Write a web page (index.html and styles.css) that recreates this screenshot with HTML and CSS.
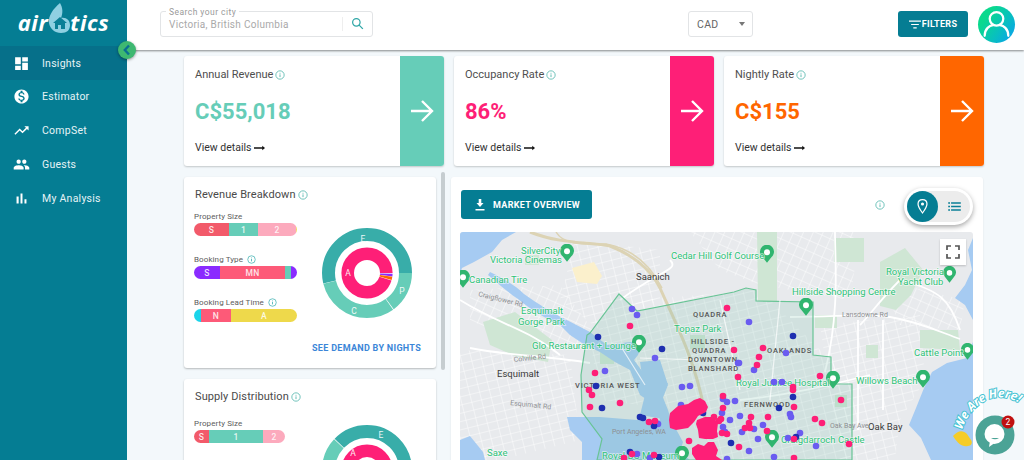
FILE: index.html
```html
<!DOCTYPE html>
<html lang="en">
<head>
<meta charset="utf-8">
<title>Airbtics Insights</title>
<link rel="stylesheet" href="styles.css">
</head>
<body>
<svg class="defs" width="0" height="0" aria-hidden="true">
  <defs>
    <symbol id="info" viewBox="0 0 12 12"><circle cx="6" cy="6" r="5" fill="none" stroke="currentColor" stroke-width="1"/><path d="M6 5.3v3.2M6 3.4v1" fill="none" stroke="currentColor" stroke-width="1.1"/></symbol>
    <symbol id="bigarrow" viewBox="0 0 24 24"><path d="M1 12h21M12 2l10 10-10 10" fill="none" stroke="currentColor" stroke-width="2.4"/></symbol>
    <symbol id="smallarrow" viewBox="0 0 12 6"><path d="M0 3h10" stroke="currentColor" stroke-width="1.4"/><path d="M9 .6 12 3 9 5.4z" fill="currentColor"/></symbol>
    <symbol id="pin" viewBox="0 0 16 20"><path d="M8 20 3 13.6A8 8 0 1 1 13 13.6z" fill="currentColor"/><circle cx="8" cy="8" r="3.4" fill="#fff"/></symbol>
    <pattern id="streets" width="10" height="8" patternUnits="userSpaceOnUse" patternTransform="rotate(-14)"><path d="M0 0H10M0 0V8" stroke="#fff" stroke-width=".9"/></pattern>
    <pattern id="streets2" width="9" height="10" patternUnits="userSpaceOnUse" patternTransform="rotate(24)"><path d="M0 0H9M0 0V10" stroke="#fff" stroke-width=".9"/></pattern>
  </defs>
</svg>
<div class="app">
  <aside class="sidebar">
    <div class="logo">
      <span>air</span>
      <svg class="logo-mark" viewBox="0 0 24 30"><path d="M13 0C6 6 1 13 2 20c1 6 6 10 12 10 6 0 9-3 9-8 0-5-4-8-9-7 2-5 2-10-1-15z" fill="#8fd0e2"/><path d="M6 20l7-6 7 6h-2v6h-4v-4h-3v4H8v-6z" fill="#0b7f96"/></svg>
      <span>tics</span>
    </div>
    <nav class="nav">
      <a class="nav-item active"><svg viewBox="0 0 24 24"><path d="M3 13h8V3H3v10zm0 8h8v-6H3v6zm10 0h8V11h-8v10zm0-18v6h8V3h-8z"/></svg>Insights</a>
      <a class="nav-item"><svg viewBox="0 0 24 24"><path d="M12 2C6.48 2 2 6.48 2 12s4.48 10 10 10 10-4.48 10-10S17.52 2 12 2zm1.41 16.09V20h-2.67v-1.93c-1.71-.36-3.16-1.46-3.27-3.4h1.96c.1 1.05.82 1.87 2.65 1.87 1.96 0 2.4-.98 2.4-1.59 0-.83-.44-1.61-2.67-2.14-2.48-.6-4.18-1.62-4.18-3.67 0-1.72 1.39-2.84 3.11-3.21V4h2.67v1.95c1.86.45 2.79 1.86 2.85 3.39H14.3c-.05-1.11-.64-1.87-2.22-1.87-1.5 0-2.4.68-2.4 1.64 0 .84.65 1.39 2.67 1.91s4.18 1.39 4.18 3.91c-.01 1.83-1.38 2.83-3.12 3.16z"/></svg>Estimator</a>
      <a class="nav-item"><svg viewBox="0 0 24 24"><path d="M16 6l2.29 2.29-4.88 4.88-4-4L2 16.59 3.41 18l6-6 4 4 6.3-6.29L22 12V6z"/></svg>CompSet</a>
      <a class="nav-item"><svg viewBox="0 0 24 24"><path d="M16 11c1.66 0 2.99-1.34 2.99-3S17.66 5 16 5c-1.66 0-3 1.34-3 3s1.34 3 3 3zm-8 0c1.66 0 2.99-1.34 2.99-3S9.66 5 8 5C6.34 5 5 6.34 5 8s1.34 3 3 3zm0 2c-2.33 0-7 1.17-7 3.5V19h14v-2.5c0-2.33-4.67-3.5-7-3.5zm8 0c-.29 0-.62.02-.97.05 1.16.84 1.97 1.97 1.97 3.45V19h6v-2.5c0-2.33-4.67-3.5-7-3.5z"/></svg>Guests</a>
      <a class="nav-item"><svg viewBox="0 0 24 24"><path d="M5 9.2h3V19H5zM10.6 5h2.8v14h-2.8zm5.6 8H19v6h-2.8z"/></svg>My Analysis</a>
    </nav>
    <button class="collapse" aria-label="Collapse"><svg viewBox="0 0 10 12"><path d="M7 1.5 2.8 6 7 10.5" fill="none" stroke="#0b6f92" stroke-width="2.4"/></svg></button>
  </aside>

  <div class="content">
    <header class="topbar">
      <div class="search">
        <span class="search-label">Search your city</span>
        <span class="search-value">Victoria, British Columbia</span>
        <span class="search-btn"><svg viewBox="0 0 16 16"><circle cx="6.6" cy="6.6" r="4.6" fill="none" stroke="currentColor" stroke-width="1.5"/><path d="m10 10 4.6 4.6" stroke="currentColor" stroke-width="1.6"/></svg></span>
      </div>
      <div class="currency"><span>CAD</span><i class="caret"></i></div>
      <button class="filters"><svg viewBox="0 0 14 10"><path d="M0 1h14M2.5 5h9M5 9h4" stroke="#fff" stroke-width="1.3"/></svg>FILTERS</button>
      <div class="avatar"><svg viewBox="0 0 36 36"><circle cx="18" cy="12.5" r="6.6" fill="none" stroke="#fff" stroke-width="2.2"/><path d="M6.5 29c0-7 5-10 8-10.5M29.5 29c0-7-5-10-8-10.500" fill="none" stroke="#fff" stroke-width="2.2" stroke-linecap="round"/></svg></div>
    </header>

    <main class="main">
      <section class="kpis">
        <article class="kpi">
          <div class="kpi-body">
            <h3 class="kpi-title">Annual Revenue <svg class="info"><use href="#info"/></svg></h3>
            <div class="kpi-value green">C$55,018</div>
            <div class="kpi-link">View details <svg class="small-arrow"><use href="#smallarrow"/></svg></div>
          </div>
          <div class="kpi-side bg-green"><svg><use href="#bigarrow"/></svg></div>
        </article>
        <article class="kpi">
          <div class="kpi-body">
            <h3 class="kpi-title">Occupancy Rate <svg class="info"><use href="#info"/></svg></h3>
            <div class="kpi-value pink">86%</div>
            <div class="kpi-link">View details <svg class="small-arrow"><use href="#smallarrow"/></svg></div>
          </div>
          <div class="kpi-side bg-pink"><svg><use href="#bigarrow"/></svg></div>
        </article>
        <article class="kpi">
          <div class="kpi-body">
            <h3 class="kpi-title">Nightly Rate <svg class="info"><use href="#info"/></svg></h3>
            <div class="kpi-value orange">C$155</div>
            <div class="kpi-link">View details <svg class="small-arrow"><use href="#smallarrow"/></svg></div>
          </div>
          <div class="kpi-side bg-orange"><svg><use href="#bigarrow"/></svg></div>
        </article>
      </section>

      <section class="lower">
        <div class="left-col">
          <article class="panel first">
            <h3 class="panel-title">Revenue Breakdown <svg class="info"><use href="#info"/></svg></h3>
            <div class="panel-body">
              <div class="bars">
                <div class="bar-label">Property Size</div>
                <div class="bar">
                  <span class="seg c-red w34">S</span><span class="seg c-green w28">1</span><span class="seg c-rose grow">2</span><span class="seg c-yellow w1"></span>
                </div>
                <div class="bar-label gap">Booking Type <svg class="info tiny"><use href="#info"/></svg></div>
                <div class="bar">
                  <span class="seg c-purple w25">S</span><span class="seg c-coral grow">MN</span><span class="seg c-green w5"></span><span class="seg c-purple w6"></span>
                </div>
                <div class="bar-label gap">Booking Lead Time <svg class="info tiny"><use href="#info"/></svg></div>
                <div class="bar">
                  <span class="seg c-cyan w7"></span><span class="seg c-coral w30">N</span><span class="seg c-lime grow">A</span>
                </div>
              </div>
              <svg class="donut" viewBox="-47 -47 94 94">
                <circle class="ring r-e" r="38.500" pathLength="360" stroke-dasharray="193.500 360" stroke-dashoffset="-166.500"/>
                <circle class="ring r-c" r="38.500" pathLength="360" stroke-dasharray="111.500 360" stroke-dashoffset="-54.500"/>
                <circle class="ring r-c" r="38.500" pathLength="360" stroke-dasharray="53.500 360"/>
                <circle class="inner r-a" r="19.300" pathLength="360" stroke-dasharray="345 360" stroke-dashoffset="-17"/>
                <circle class="inner r-p" r="19.300" pathLength="360" stroke-dasharray="6 360" stroke-dashoffset="-2"/>
                <circle class="inner r-o" r="19.300" pathLength="360" stroke-dasharray="7 360" stroke-dashoffset="-9"/>
                <text class="donut-text" x="-4" y="-31">E</text>
                <text class="donut-text" x="-19" y="3">A</text>
                <text class="donut-text" x="35" y="21">P</text>
                <text class="donut-text" x="-13" y="41">C</text>
              </svg>
            </div>
            <a class="demand">SEE DEMAND BY NIGHTS</a>
          </article>
          <article class="panel second">
            <h3 class="panel-title">Supply Distribution <svg class="info"><use href="#info"/></svg></h3>
            <div class="panel-body">
              <div class="bars supply">
                <div class="bar-label">Property Size</div>
                <div class="bar">
                  <span class="seg c-red w15">S</span><span class="seg c-green grow">1</span><span class="seg c-rose w22">2</span>
                </div>
              </div>
              <svg class="donut lower-donut" viewBox="-47 -47 94 94">
                <circle class="ring r-e" r="38.500" pathLength="360" stroke-dasharray="250 360" stroke-dashoffset="-224"/>
                <circle class="ring r-c" r="38.500" pathLength="360" stroke-dasharray="80 360" stroke-dashoffset="-143"/>
                <circle class="inner r-a" r="19.300"/>
                <text class="donut-text" x="14" y="-32">E</text>
                <text class="donut-text" x="-14" y="-14">A</text>
              </svg>
            </div>
          </article>
        </div>
        <div class="scrollbar"></div>

        <article class="market">
          <div class="market-head">
            <button class="overview"><svg viewBox="0 0 14 14"><path d="M10.500 5H8.300V1H5.700v4H3.500L7 9zM2.500 11h9v1.500h-9z" fill="#fff"/></svg>MARKET OVERVIEW</button>
            <svg class="info market-info"><use href="#info"/></svg>
            <div class="view-toggle">
              <div class="toggle-track">
                <span class="toggle-on"><svg viewBox="0 0 16 20"><path d="M8 1.500C4.600 1.500 2.500 4 2.500 7c0 3.800 5.500 11 5.500 11s5.500-7.200 5.500-11c0-3-2.100-5.500-5.500-5.500z" fill="none" stroke="#fff" stroke-width="1.500"/><circle cx="8" cy="7" r="1.900" fill="#fff"/></svg></span>
                <span class="toggle-off"><svg viewBox="0 0 14 10"><path d="M0 1h2M3.200 1H14M0 5h2M3.200 5H14M0 9h2M3.200 9H14" stroke="#0b7f96" stroke-width="1.700"/></svg></span>
              </div>
            </div>
          </div>
          <div class="map">
            <svg class="map-svg" viewBox="460 232 513 228" preserveAspectRatio="none">
              <rect x="460" y="232" width="513" height="228" fill="#e8eaed"/>
              <!-- street grids -->
              <path d="M470 290 560 285 600 340 540 355 470 320z" fill="url(#streets2)"/>
              <path d="M575 240 660 250 660 300 600 330 560 300z" fill="url(#streets)"/>
              <path d="M460 350 570 355 580 440 500 460 460 460z" fill="url(#streets)"/>
              <path d="M640 300 760 290 850 380 850 460 720 460 680 410 600 400 590 340z" fill="url(#streets)"/>
              <path d="M820 325 920 315 925 380 900 420 895 460 840 460z" fill="url(#streets)"/>
              <path d="M690 232H860L850 300 760 285 720 270z" fill="url(#streets2)"/>
              <path d="M880 280 965 300 960 330 900 325z" fill="url(#streets2)"/>
              <!-- parks -->
              <g class="park">
                <path d="M483 322 515 312 552 340 548 362 515 356 490 345z"/>
                <path d="M757 232h20v69h-19z"/>
                <path d="M880 262l25-14 18 22-12 25-15 15-16-4z"/>
                <path d="M834 238h30v24h-30z"/>
                <path d="M920 330h38l2 20-40-2z"/>
                <path d="M815 315h22v13h-22zM866 345h12v13h-12zM600 352h14v12h-14zM525 255h14v10h-14zM690 335h15v14h-15zM835 395h12v12h-12z"/>
              </g>
              <path d="M572 268l22-6 8 14-5 8-20-2z" fill="#fbf0cc"/>
              <!-- water -->
              <g class="water">
                <path d="M460 232h56l-14 8-10 12-18 10-12 6-4 12-5-2z"/>
                <path d="M490 272c12 6 24 12 34 22 14 10 28 18 40 25l-4 6c-14-6-30-16-42-26-12-8-20-16-30-24z"/>
                <path d="M563 318 590 332 607 345 630 342 642 344 638 355 634 360 645 375 648 385 668 383 662 395 668 410 671 420 660 420 655 405 640 395 630 370 615 362 600 352 585 345 570 335 560 325z"/>
                <path d="M640 362 660 360 668 385 662 400 670 420 640 415 645 395z"/>
                <path d="M567 417 600 417 637 420 671 420 683 442 680 452 690 460H582L582 442 570 430z"/>
                <path d="M973 238 968 250 972 270 965 285 955 298 965 305 973 320 973 342 967 358 947 363 932 372 924 388 916 408 909 425 921 438 931 460H973z"/>
                <path d="M460 440 470 436 483 452 485 460H460z"/>
              </g>
              <path d="M530 232c30 12 60 10 80 14 20 8 40 22 50 42 16 36 34 70 44 120 2 18 2 30 3 30" fill="none" stroke="#dcd3b4" stroke-width="3"/>
              <path d="M556 232c8 14 30 12 50 12 22 4 42 16 56 44" fill="none" stroke="#dcd3b4" stroke-width="1.500"/>
              <!-- main roads -->
              <g class="road">
                <path d="M460 300c40 25 70 30 100 55"/>
                <path d="M470 348c40 8 80 8 120 15"/>
                <path d="M620 300c40-30 60-30 50-40"/>
                <path d="M790 317c50 0 70-4 100 0 30 5 50 15 70 22"/>
                <path d="M900 280c-20 20-30 35-40 45"/>
                <path d="M960 330c-10-30-20-40-60-50"/>
                <path d="M835 232c0 30 5 80-10 140"/>
                <path d="M858 320v110M883 320v90"/>
                <path d="M740 400c50-5 90-15 130-25"/>
              </g>
              <!-- region overlay -->
              <path class="region" d="M619 294 637 311 734 292 746 288 756 290 756 301 813 302 813 355 831 357 831 384 852 384 852 460H597L602 439 582 412 581 375 587 335 590 333Z"/>
              <path class="h-road" d="M640 358 700 360M720 300l20 90M780 300l-10 100M620 345l25 40"/>
              <!-- POI pins -->
              <g class="poi">
                <use href="#pin" x="560" y="244" width="14" height="18"/>
                <use href="#pin" x="456" y="270" width="14" height="18"/>
                <use href="#pin" x="632" y="335" width="14" height="18"/>
                <use href="#pin" x="760" y="245" width="14" height="18"/>
                <use href="#pin" x="943" y="266" width="13" height="17"/>
                <use href="#pin" x="961" y="343" width="13" height="17"/>
                <use href="#pin" x="916" y="370" width="14" height="18"/>
                <use href="#pin" x="826" y="371" width="14" height="18"/>
                <use href="#pin" x="799" y="298" width="14" height="18"/>
                <use href="#pin" x="765" y="430" width="14" height="18"/>
                <use href="#pin" x="675" y="446" width="14" height="18"/>
              </g>
              <!-- labels -->
              <g class="lbl-green">
                <text x="521" y="254">SilverCity</text>
                <text x="490" y="263">Victoria Cinemas</text>
                <text x="469" y="283">Canadian Tire</text>
                <text x="521" y="314">Esquimalt</text>
                <text x="518" y="325">Gorge Park</text>
                <text x="532" y="349">Glo Restaurant + Lounge</text>
                <text x="674" y="332">Topaz Park</text>
                <text x="671" y="259">Cedar Hill Golf Course</text>
                <text x="886" y="275">Royal Victoria</text>
                <text x="898" y="285">Yacht Club</text>
                <text x="792" y="295">Hillside Shopping Centre</text>
                <text x="914" y="356">Cattle Point</text>
                <text x="856" y="384">Willows Beach</text>
                <text x="736" y="386">Royal Jubilee Hospital</text>
                <text x="781" y="443">Craigdarroch Castle</text>
                <text x="602" y="459">Royal BC Museum</text>
                <text x="487" y="456">Saxe</text>
              </g>
              <g class="lbl-black">
                <text x="636" y="280">Saanich</text>
                <text x="497" y="377">Esquimalt</text>
                <text x="868" y="430">Oak Bay</text>
              </g>
              <g class="lbl-caps">
                <text x="575" y="388">VICTORIA WEST</text>
                <text x="693" y="317">QUADRA</text>
                <text x="691" y="344">HILLSIDE -</text>
                <text x="692" y="353">QUADRA</text>
                <text x="688" y="362">DOWNTOWN</text>
                <text x="688" y="371">BLANSHARD</text>
                <text x="744" y="407">FERNWOOD</text>
                <text x="767" y="353">OAKLANDS</text>
              </g>
              <g class="lbl-road">
                <text x="842" y="317">Lansdowne Rd</text>
                <text x="478" y="296" transform="rotate(14 478 296)">Craigflower Rd</text>
                <text x="514" y="362" transform="rotate(-6 514 362)">Colville Rd</text>
                <text x="510" y="405" transform="rotate(6 510 405)">Esquimalt Rd</text>
                <text x="612" y="434">Port Angeles, WA</text>
                <text x="830" y="428">Oak Bay Ave</text>
              </g>
              <!-- listing dots -->
              <g class="dots-violet">
                <circle cx="632" cy="309" r="3.300"/><circle cx="637" cy="315" r="3.300"/><circle cx="655" cy="358" r="3.300"/><circle cx="605" cy="371" r="3.300"/><circle cx="682" cy="387" r="3.300"/><circle cx="690" cy="386" r="3.300"/><circle cx="749" cy="322" r="3.300"/><circle cx="738" cy="363" r="3.300"/>
                <circle cx="786" cy="353" r="3.300"/><circle cx="739" cy="363" r="3.300"/><circle cx="754" cy="370" r="3.300"/><circle cx="774" cy="382" r="3.300"/><circle cx="782" cy="382" r="3.300"/><circle cx="723" cy="399" r="3.300"/><circle cx="727" cy="402" r="3.300"/><circle cx="735" cy="401" r="3.300"/><circle cx="722" cy="413" r="3.300"/><circle cx="740" cy="416" r="3.300"/><circle cx="730" cy="420" r="3.300"/><circle cx="763" cy="425" r="3.300"/><circle cx="754" cy="429" r="3.300"/><circle cx="742" cy="432" r="3.300"/><circle cx="758" cy="439" r="3.300"/><circle cx="790" cy="414" r="3.300"/><circle cx="791" cy="417" r="3.300"/><circle cx="800" cy="433" r="3.300"/><circle cx="788" cy="438" r="3.300"/><circle cx="816" cy="446" r="3.300"/><circle cx="712" cy="447" r="3.300"/><circle cx="749" cy="451" r="3.300"/><circle cx="774" cy="457" r="3.300"/><circle cx="681" cy="405" r="3.300"/><circle cx="723" cy="427" r="3.300"/><circle cx="725" cy="432" r="3.300"/><circle cx="658" cy="424" r="3.300"/><circle cx="714" cy="434" r="3.300"/><circle cx="637" cy="454" r="3.300"/><circle cx="650" cy="458" r="3.300"/><circle cx="727" cy="459" r="3.300"/>
              </g>
              <g class="dots-navy">
                <circle cx="598" cy="337" r="3.300"/><circle cx="662" cy="349" r="3.300"/><circle cx="596" cy="386" r="3.300"/><circle cx="602" cy="408" r="3.300"/><circle cx="793" cy="336" r="3.300"/><circle cx="779" cy="408" r="3.300"/><circle cx="793" cy="397" r="3.300"/><circle cx="731" cy="443" r="3.300"/><circle cx="796" cy="437" r="3.300"/><circle cx="640" cy="417" r="3.300"/><circle cx="643" cy="418" r="3.300"/><circle cx="654" cy="426" r="3.300"/><circle cx="703" cy="413" r="3.300"/><circle cx="630" cy="452" r="3.300"/><circle cx="659" cy="457" r="3.300"/>
              </g>
              <g class="dots-pink">
                <circle cx="630" cy="326" r="3.300"/><circle cx="595" cy="373" r="3.300"/><circle cx="589" cy="390" r="3.300"/><circle cx="592" cy="395" r="3.300"/><circle cx="590" cy="407" r="3.300"/><circle cx="620" cy="403" r="3.300"/><circle cx="649" cy="422" r="3.300"/><circle cx="655" cy="421" r="3.300"/><circle cx="727" cy="308" r="3.300"/>
                <circle cx="734" cy="350" r="3.300"/><circle cx="763" cy="348" r="3.300"/><circle cx="759" cy="357" r="3.300"/><circle cx="757" cy="365" r="3.300"/><circle cx="738" cy="377" r="3.300"/><circle cx="820" cy="376" r="3.300"/><circle cx="793" cy="387" r="3.300"/><circle cx="793" cy="390" r="3.300"/><circle cx="723" cy="396" r="3.300"/><circle cx="841" cy="400" r="3.300"/><circle cx="794" cy="407" r="3.300"/><circle cx="723" cy="408" r="3.300"/><circle cx="721" cy="419" r="3.300"/><circle cx="768" cy="417" r="3.300"/><circle cx="751" cy="417" r="3.300"/><circle cx="749" cy="423" r="3.300"/><circle cx="745" cy="428" r="3.300"/><circle cx="750" cy="428" r="3.300"/><circle cx="815" cy="419" r="3.300"/><circle cx="822" cy="423" r="3.300"/><circle cx="767" cy="431" r="3.300"/><circle cx="722" cy="433" r="3.300"/><circle cx="727" cy="434" r="3.300"/><circle cx="794" cy="439" r="3.300"/><circle cx="849" cy="444" r="3.300"/><circle cx="739" cy="447" r="3.300"/><circle cx="689" cy="441" r="3.300"/><circle cx="710" cy="457" r="3.300"/><circle cx="794" cy="458" r="3.300"/><circle cx="654" cy="455" r="3.300"/><circle cx="632" cy="454" r="3.300"/><circle cx="624" cy="458" r="3.300"/><circle cx="714" cy="417" r="3.300"/><circle cx="719" cy="421" r="3.300"/>
                <path d="M670 413l8-7 10-2 6-4 6-2 5 3 3 6-2 5-8 4-4 6-6 6-12 2-6-2-1-8z"/>
                <path d="M697 420l8-3 8 0 5 6-1 8 1 6-5 2-8 0-6-1-1-8-2-6z"/>
                <path d="M692 448l6-4 6 2 4-4 6 0 4 8-2 6 6 4h-26l-4-6z"/>
              </g>
            </svg>
            <button class="fullscreen" aria-label="Fullscreen"><svg viewBox="0 0 14 14"><path d="M1 5V1h4M9 1h4v4M13 9v4H9M5 13H1V9" fill="none" stroke="#555" stroke-width="1.700"/></svg></button>
          </div>
        </article>
      </section>
    </main>
  </div>
</div>

<div class="chat">
  <svg class="chat-art" viewBox="0 0 74 80">
    <defs><path id="here-arc" d="M12 50C19 24 50 4 75 28"/></defs>
    <text class="here"><textPath href="#here-arc">We Are Here!</textPath></text>
    <path class="hand" d="M3 56c5-6 10-6 14-2l4 6c2 3 0 6-3 6-6 1-10-2-15-10z"/>
    <circle class="chat-ball" cx="45" cy="55" r="19.500"/>
    <circle class="chat-bubble" cx="44.500" cy="54" r="10"/>
    <path class="chat-bubble" d="M40 61l-1 6 7-5z"/>
    <path class="chat-smile" d="M41 58q4 2.500 8 0z"/>
    <circle class="chat-badge" cx="58" cy="42" r="6.500"/>
    <text class="chat-count" x="58" y="45">2</text>
  </svg>
</div>
</body>
</html>
```
FILE: styles.css
```css
* { box-sizing: border-box; }
html, body { margin: 0; height: 460px; overflow: hidden; }
body { font-family: Roboto, "Liberation Sans", sans-serif; background: #f3f8fb; color: #4a4a4a; }
.defs { position: absolute; }
.app { display: flex; height: 460px; }

/* Sidebar */
.sidebar { position: relative; width: 127px; flex: none; background: #057d93; color: #fff; z-index: 3; }
.logo { height: 46px; display: flex; align-items: center; justify-content: center; padding-bottom: 2px; font: italic 700 22px "Open Sans", sans-serif; letter-spacing: .6px; color: #fff; }
.logo-mark { width: 24px; height: 30px; margin: -8px -1px 0; }
.nav-item { display: flex; align-items: center; height: 34px; padding: 0 0 2px 13px; font-size: 10.500px; letter-spacing: .25px; color: #e6f3f6; }
.nav-item svg { width: 17px; height: 17px; margin-right: 12px; fill: #fff; }
.nav-item.active { background: #06708a; padding-bottom: 0; }
.collapse { position: absolute; left: 118px; top: 41px; width: 18px; height: 18px; padding: 3px 4px; border: 0; border-radius: 50%; background: #3eb871; box-shadow: 0 1px 3px rgba(0,0,0,.4); }
.collapse svg { display: block; width: 10px; height: 12px; }

/* Top bar */
.content { flex: 1; min-width: 0; display: flex; flex-direction: column; }
.topbar { position: relative; z-index: 2; flex: none; height: 50px; background: #fff; box-shadow: 0 1px 2px rgba(0,0,0,.45); display: flex; align-items: flex-start; padding: 11px 9px 0 33px; }
.search { position: relative; width: 213px; height: 26px; border: 1px solid #e2e4e6; border-radius: 3px; display: flex; align-items: center; padding-left: 8px; }
.search-label { position: absolute; left: 5px; top: -5px; padding: 0 3px; background: #fff; font-size: 8.500px; line-height: 10px; letter-spacing: .45px; color: #9a9a9a; }
.search-value { font-size: 10px; letter-spacing: .3px; color: #a9a9a9; }
.search-btn { position: absolute; right: 0; top: 5px; width: 30px; height: 14px; border-left: 1px solid #eee; color: #2ea6a6; display: flex; justify-content: center; }
.search-btn svg { width: 13px; height: 13px; }
.currency { margin-left: 315px; width: 65px; height: 26px; border: 1px solid #e2e4e6; border-radius: 3px; display: flex; align-items: center; justify-content: space-between; padding: 0 7px 0 8px; font-size: 10.500px; letter-spacing: .3px; color: #666; }
.caret { width: 0; height: 0; border: 3.500px solid transparent; border-top: 4px solid #777; border-bottom: 0; }
.filters { margin-left: 145px; width: 70px; height: 26px; border: 0; border-radius: 3px; background: #057d93; color: #fff; font: 700 9px Roboto, sans-serif; letter-spacing: .3px; display: flex; align-items: center; justify-content: center; gap: 1px; }
.filters svg { width: 12px; height: 9px; }
.avatar { margin: -5px 0 0 10px; width: 37px; height: 37px; border-radius: 50%; background: linear-gradient(125deg, #0ad98e 25%, #08bfc0 62%, #0a9cf5); }
.avatar svg { display: block; width: 37px; height: 37px; }

/* Main */
.main { flex: 1; min-height: 0; padding: 6px 0 0 57px; }
.kpis { display: flex; gap: 10px; }
.kpi { width: 260px; height: 110px; display: flex; background: #fff; border-radius: 3px; box-shadow: 0 1px 2px rgba(0,0,0,.2); overflow: hidden; }
.kpi-body { flex: 1; padding: 11px 0 0 11px; }
.kpi-title { margin: 0; font-size: 11px; line-height: 15px; font-weight: 400; color: #4e4e4e; display: flex; align-items: center; gap: 2px; }
.kpi-value { margin-top: 15px; font-size: 22px; line-height: 30px; font-weight: 700; }
.kpi-link { margin-top: 14px; font-size: 10.500px; line-height: 14px; color: #333; display: flex; align-items: center; gap: 3px; }
.small-arrow { width: 11px; height: 6px; color: #111; }
.kpi-side { width: 44px; flex: none; display: flex; align-items: center; justify-content: center; color: #fff; }
.kpi-side svg { width: 24px; height: 24px; }
.green { color: #66cdb8; } .pink { color: #fe1f77; } .orange { color: #ff6600; }
.bg-green { background: #66cdb8; } .bg-pink { background: #fe1f77; } .bg-orange { background: #ff6600; }
.info { width: 10px; height: 10px; color: #57b8ae; flex: none; }
.info.tiny { width: 9px; height: 9px; color: #3fb0b0; }

/* Lower section */
.lower { margin-top: 11px; display: flex; align-items: flex-start; }
.left-col { width: 252px; flex: none; display: flex; flex-direction: column; gap: 11px; }
.scrollbar { width: 4px; height: 198px; margin: -5px 6px 0 5px; flex: none; border-radius: 2px; background: #c6cdd0; }
.panel { position: relative; width: 252px; background: #fff; border-radius: 3px; box-shadow: 0 1px 2px rgba(0,0,0,.25); padding: 10px 10px 0 11px; }
.panel.first { height: 191px; }
.panel.second { height: 200px; }
.panel-title { margin: 0; font-size: 11px; line-height: 16px; font-weight: 400; letter-spacing: .1px; color: #4a4a4a; display: flex; align-items: center; gap: 2px; }
.panel-body { display: flex; margin: 7px 0 0 -1px; }
.bars { width: 103px; flex: none; }
.supply { width: 91px; margin-top: 5px; }
.bar-label { display: flex; align-items: center; gap: 4px; height: 13px; font-size: 8px; letter-spacing: .1px; color: #5c5c5c; }
.bar-label.gap { margin-top: 17px; }
.bar { display: flex; height: 13px; border-radius: 7px; overflow: hidden; }
.seg { display: flex; align-items: center; justify-content: center; font-size: 8.500px; font-weight: 500; color: rgba(255,255,255,.85); letter-spacing: .3px; }
.grow { flex: 1; }
.w1 { width: 1px; } .w5 { width: 6px; } .w6 { width: 6px; } .w7 { width: 7px; } .w15 { width: 15px; } .w22 { width: 22px; } .w25 { width: 26px; } .w28 { width: 29px; } .w30 { width: 30px; } .w34 { width: 35px; }
.c-red { background: #f25a6a; } .c-green { background: #66cdb8; } .c-rose { background: #fcaabd; } .c-yellow { background: #f2d860; }
.c-purple { background: #8a2bff; } .c-coral { background: #fd5a78; } .c-cyan { background: #1ad4ea; } .c-lime { background: #eed94b; }
.donut { width: 94px; height: 94px; margin: 16px 0 0 23px; flex: none; overflow: visible; }
.lower-donut { margin: 11px 0 0 35px; }
.ring, .inner { fill: none; }
.ring { stroke-width: 13; }
.inner { stroke-width: 12.600; }
.r-e { stroke: #38ada9; } .r-c { stroke: #66cdb8; } .r-a { stroke: #fe1f77; } .r-p { stroke: #8a2bff; } .r-o { stroke: #ff6600; }
.donut-text { font-size: 8.500px; fill: #fff; text-anchor: middle; opacity: .9; }
.demand { position: absolute; right: 15px; top: 166px; font-size: 9px; font-weight: 700; letter-spacing: .3px; color: #3b86d8; }

/* Market */
.market { width: 532px; height: 300px; flex: none; background: #fff; border-radius: 3px; padding: 13px 10px 0 9px; box-shadow: 0 1px 2px rgba(0,0,0,.1); }
.market-head { position: relative; height: 42px; display: flex; align-items: flex-start; }
.overview { margin-left: 1px; width: 131px; height: 29px; border: 0; border-radius: 3px; background: #057d93; color: #fff; font: 700 9px Roboto, sans-serif; letter-spacing: .3px; display: flex; align-items: center; justify-content: center; gap: 6px; }
.overview svg { width: 14px; height: 14px; }
.market-info { position: absolute; left: 415px; top: 10px; }
.view-toggle { position: absolute; right: 0; top: -2px; width: 69px; height: 37px; padding: 3px; background: #fff; border-radius: 19px; box-shadow: 0 2px 5px rgba(0,0,0,.35); }
.toggle-track { height: 31px; border-radius: 16px; background: #ececec; display: flex; align-items: center; }
.toggle-on { width: 31px; height: 31px; border-radius: 50%; background: #057d93; display: flex; align-items: center; justify-content: center; }
.toggle-on svg { width: 13px; height: 17px; }
.toggle-off { flex: 1; display: flex; justify-content: center; }
.toggle-off svg { width: 13px; height: 9px; }
.map { position: relative; width: 513px; height: 228px; overflow: hidden; border-radius: 3px 3px 0 0; }
.map-svg { display: block; width: 513px; height: 228px; font-family: Roboto, sans-serif; }
.fullscreen { position: absolute; right: 7px; top: 7px; width: 26px; height: 26px; padding: 6px; border: 0; background: #fff; box-shadow: 0 1px 2px rgba(0,0,0,.2); }
.fullscreen svg { display: block; width: 14px; height: 14px; }
.park path { fill: #cfe6d4; }
.water path { fill: #a6cbf2; }
.road path { fill: none; stroke: #fff; stroke-width: 1.800; }
.region { fill: rgba(120,190,170,.2); stroke: #68c495; stroke-width: 1.200; }
.h-road { fill: none; stroke: rgba(255,255,255,.7); stroke-width: 1.200; }
.poi { color: #30b56f; }
.lbl-green { font-size: 9.500px; fill: #2fc278; stroke: rgba(255,255,255,.6); stroke-width: 1.500px; paint-order: stroke; }
.lbl-black { font-size: 9.500px; fill: #3a3a3a; }
.lbl-caps { font-size: 7.500px; font-weight: 500; letter-spacing: .8px; fill: #555; }
.lbl-road { font-size: 7px; fill: #8d8f92; }
.dots-pink { fill: #fe1f77; }
.dots-violet { fill: #6a5cf0; }
.dots-navy { fill: #1e2fb0; }

/* Chat */
.chat { position: absolute; right: 0; bottom: 0; width: 74px; height: 80px; z-index: 5; }
.chat-art { display: block; width: 74px; height: 80px; }
.here { font: italic 700 12px "Open Sans", sans-serif; fill: #fff; stroke: #46c3d3; stroke-width: 2px; paint-order: stroke; }
.hand { fill: #f5cc28; }
.chat-ball { fill: #4ba396; }
.chat-bubble { fill: #fff; }
.chat-smile { fill: #4ba396; }
.chat-badge { fill: #c01010; }
.chat-count { font-size: 8.500px; fill: #fff; text-anchor: middle; }
```
